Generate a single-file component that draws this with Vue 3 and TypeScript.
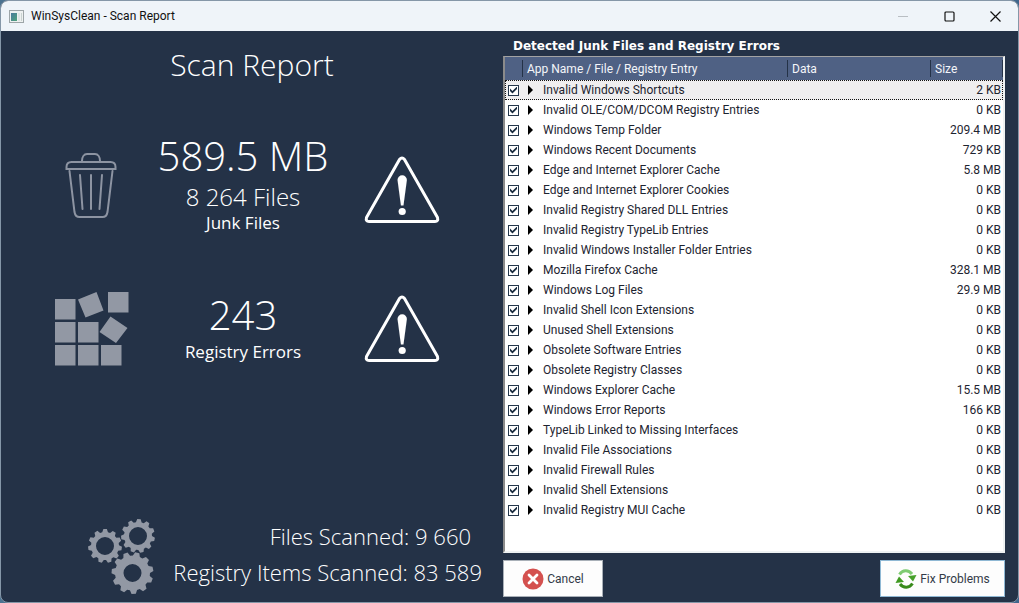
<script setup lang="ts">
import { ref } from 'vue'

interface ScanItem {
  name: string
  data: string
  size: string
  checked: boolean
}

const source: [string, string][] = [
  ['Invalid Windows Shortcuts', '2 KB'],
  ['Invalid OLE/COM/DCOM Registry Entries', '0 KB'],
  ['Windows Temp Folder', '209.4 MB'],
  ['Windows Recent Documents', '729 KB'],
  ['Edge and Internet Explorer Cache', '5.8 MB'],
  ['Edge and Internet Explorer Cookies', '0 KB'],
  ['Invalid Registry Shared DLL Entries', '0 KB'],
  ['Invalid Registry TypeLib Entries', '0 KB'],
  ['Invalid Windows Installer Folder Entries', '0 KB'],
  ['Mozilla Firefox Cache', '328.1 MB'],
  ['Windows Log Files', '29.9 MB'],
  ['Invalid Shell Icon Extensions', '0 KB'],
  ['Unused Shell Extensions', '0 KB'],
  ['Obsolete Software Entries', '0 KB'],
  ['Obsolete Registry Classes', '0 KB'],
  ['Windows Explorer Cache', '15.5 MB'],
  ['Windows Error Reports', '166 KB'],
  ['TypeLib Linked to Missing Interfaces', '0 KB'],
  ['Invalid File Associations', '0 KB'],
  ['Invalid Firewall Rules', '0 KB'],
  ['Invalid Shell Extensions', '0 KB'],
  ['Invalid Registry MUI Cache', '0 KB'],
]

const items = ref<ScanItem[]>(source.map(([name, size]) => ({ name, data: '', size, checked: true })))
const selected = ref(0)

// Ring-shaped gear outline, filled with the even-odd rule.
function gear(cx: number, cy: number, outer: number, root: number, hole: number, teeth: number, turn: number): string {
  const step = (Math.PI * 2) / teeth
  const at = (r: number, a: number) => `${(cx + r * Math.cos(a)).toFixed(2)} ${(cy + r * Math.sin(a)).toFixed(2)}`
  const points: string[] = []
  for (let i = 0; i < teeth; i++) {
    const a = turn + i * step
    points.push(at(root, a - step * 0.36), at(outer, a - step * 0.18), at(outer, a + step * 0.18), at(root, a + step * 0.36))
  }
  return `M${points.join('L')}ZM${cx - hole} ${cy}a${hole} ${hole} 0 1 0 ${hole * 2} 0a${hole} ${hole} 0 1 0 ${-hole * 2} 0Z`
}

const gears = [
  gear(17, 28, 17, 14, 9, 11, 0.15),
  gear(50, 18, 17, 14, 9, 11, 0.2),
  gear(44.5, 55, 21, 17.5, 9, 11, -0.2),
]
</script>

<template>
  <main class="window">
    <header class="titlebar">
      <svg class="app-icon" width="15" height="13" viewBox="0 0 15 13" aria-hidden="true">
        <defs>
          <linearGradient id="screen" x1="0" y1="0" x2="1" y2="1">
            <stop offset="0" stop-color="#4a7a9c" />
            <stop offset="1" stop-color="#4fa37c" />
          </linearGradient>
        </defs>
        <rect x=".5" y=".5" width="14" height="12" fill="#eef1f1" stroke="#9da5a8" />
        <rect x="2" y="3" width="6" height="8" fill="url(#screen)" />
        <rect x="9" y="3" width="2" height="8" fill="#dfe5e4" />
        <rect x="12" y="3" width="1" height="8" fill="#c9d3d1" />
      </svg>
      <h1 class="caption">WinSysClean - Scan Report</h1>
      <div class="controls">
        <button type="button" aria-label="Minimize" disabled>
          <svg width="11" height="11" viewBox="0 0 11 11"><path d="M0 5.5h10" stroke="#b9bec3" fill="none" /></svg>
        </button>
        <button type="button" aria-label="Maximize">
          <svg width="11" height="11" viewBox="0 0 11 11"><rect x="1" y="1" width="9" height="9" rx="1" fill="none" stroke="#111" stroke-width="1.2" /></svg>
        </button>
        <button type="button" aria-label="Close">
          <svg width="11" height="11" viewBox="0 0 11 11"><path d="M.5 .5l10 10M10.5 .5l-10 10" fill="none" stroke="#111" stroke-width="1.2" /></svg>
        </button>
      </div>
    </header>

    <div class="content">
      <section class="summary">
        <h2 class="heading">Scan Report</h2>

        <div class="stat junk">
          <svg width="52" height="76" viewBox="0 0 52 76" fill="none" stroke="#8d94a2" stroke-width="2" stroke-linecap="round" aria-hidden="true">
            <path d="M17 9c0-4 2-7 5-7h8c3 0 5 3 5 7" />
            <path d="M1.5 17v-2c0-3 2-5 5-5h39c3 0 5 2 5 5v2z" />
            <path d="M4.5 19l5 41c.5 3 2 5 5 5h23c3 0 4.5-2 5-5l5-41M15 23l2.5 34M26 23v34M37 23l-2.5 34" />
          </svg>
          <div class="figures">
            <strong class="big">589.5 MB</strong>
            <span class="mid">8 264 Files</span>
            <span class="small">Junk Files</span>
          </div>
          <svg width="76" height="68" viewBox="0 0 76 68" aria-hidden="true">
            <path d="M35.5 3.5Q38 .5 40.5 3.5L73.5 61.5Q74.5 65.5 71 65.5H5Q1.5 65.5 2.5 61.5Z" fill="none" stroke="#fff" stroke-width="3" stroke-linejoin="round" />
            <path d="M33.5 24a4.7 4.7 0 0 1 9.4 0L39.5 49.5h-2.6Z" fill="#fff" />
            <circle cx="38.2" cy="55.5" r="3.6" fill="#fff" />
          </svg>
        </div>

        <div class="stat registry">
          <svg width="76" height="76" viewBox="0 0 76 76" fill="#9298a4" aria-hidden="true">
            <rect x="2" y="8" width="20.5" height="20.5" />
            <rect x="55" y="1" width="20.5" height="20.5" />
            <rect x="2" y="31" width="20.5" height="20.5" />
            <rect x="25" y="31" width="20.5" height="20.5" />
            <rect x="2" y="54" width="20.5" height="20.5" />
            <rect x="25" y="54" width="20.5" height="20.5" />
            <rect x="48" y="54" width="20.5" height="20.5" />
            <path d="M25 8.5L43.5 1 50.5 19.500 32.500 26.500ZM57.500 25.500L74.500 37 63 52 46.500 41Z" />
          </svg>
          <div class="figures">
            <strong class="big">243</strong>
            <span class="small">Registry Errors</span>
          </div>
          <svg width="76" height="68" viewBox="0 0 76 68" aria-hidden="true">
            <path d="M35.5 3.5Q38 .5 40.5 3.5L73.5 61.5Q74.5 65.5 71 65.5H5Q1.5 65.5 2.5 61.5Z" fill="none" stroke="#fff" stroke-width="3" stroke-linejoin="round" />
            <path d="M33.5 24a4.7 4.7 0 0 1 9.4 0L39.5 49.5h-2.6Z" fill="#fff" />
            <circle cx="38.2" cy="55.5" r="3.6" fill="#fff" />
          </svg>
        </div>

        <div class="totals">
          <svg width="68" height="78" viewBox="0 0 68 78" fill="#9298a4" fill-rule="evenodd" aria-hidden="true">
            <path v-for="d in gears" :key="d" :d="d" />
          </svg>
          <div class="counts">
            <p class="files">Files Scanned: 9 660</p>
            <p>Registry Items Scanned: 83 589</p>
          </div>
        </div>
      </section>

      <section class="results">
        <h2 class="list-title">Detected Junk Files and Registry Errors</h2>
        <div class="list">
          <table>
            <colgroup>
              <col class="c-check" />
              <col class="c-name" />
              <col class="c-data" />
              <col class="c-size" />
            </colgroup>
            <thead>
              <tr>
                <th aria-label="Selected"></th>
                <th>App Name / File / Registry Entry</th>
                <th>Data</th>
                <th>Size</th>
              </tr>
            </thead>
            <tbody>
              <tr v-for="(item, i) in items" :key="item.name" :class="{ selected: i === selected }" @click="selected = i">
                <td class="check"><input v-model="item.checked" type="checkbox" :aria-label="item.name" /></td>
                <td class="name">
                  <div class="entry">
                    <button type="button" class="expand" :aria-label="'Expand ' + item.name"></button>
                    <span>{{ item.name }}</span>
                  </div>
                </td>
                <td>{{ item.data }}</td>
                <td class="size">{{ item.size }}</td>
              </tr>
            </tbody>
          </table>
        </div>
        <footer class="actions">
          <button type="button" class="action cancel">
            <svg width="22" height="22" viewBox="0 0 22 22" aria-hidden="true">
              <circle cx="11" cy="11" r="10.5" fill="#d4514f" />
              <path d="M7 7l8 8M15 7l-8 8" stroke="#fff" stroke-width="2.8" stroke-linecap="round" />
            </svg>
            Cancel
          </button>
          <button type="button" class="action fix">
            <svg width="22" height="20" viewBox="0 0 22 20" aria-hidden="true">
              <path d="M4.500 5.500C7.500 .8 13.500 .5 17 5" fill="none" stroke="#7ecb72" stroke-width="3" />
              <path d="M13 7L21.500 6 18 12.500Z" fill="#459f29" />
              <path d="M17.500 14.500C14.500 19.200 8.500 19.500 5 15" fill="none" stroke="#388a1b" stroke-width="3" />
              <path d="M9 13L.5 14 4 7.500Z" fill="#3f9a20" />
            </svg>
            Fix Problems
          </button>
        </footer>
      </section>
    </div>
  </main>
</template>

<style>
html,
body,
#app {
  height: 100%;
}

body {
  margin: 0;
  background: linear-gradient(90deg, #4c7391, #8b929c 40%, #8b929c 60%, #3f668c);
}
</style>

<style scoped>
.window {
  box-sizing: border-box;
  min-height: 100%;
  display: flex;
  flex-direction: column;
  overflow: hidden;
  border: 1px solid #8597a8;
  border-radius: 8px;
  background: #243247;
  font: 12px/20px Roboto, "Noto Sans", sans-serif;
}

h1,
h2,
p {
  margin: 0;
}

button {
  padding: 0;
  border: 0;
  background: none;
  font: inherit;
}

.titlebar {
  display: flex;
  align-items: center;
  height: 30px;
  padding-left: 8px;
  background: #eff4f9;
}

.caption {
  flex: 1;
  margin-left: 7px;
  color: #111;
  font-size: 12px;
  font-weight: 400;
}

.controls {
  display: flex;
}

.controls button {
  display: flex;
  align-items: center;
  justify-content: center;
  width: 46px;
  height: 30px;
}

.content {
  flex: 1;
  display: grid;
  grid-template-columns: 502fr 515fr;
}

.summary {
  display: flex;
  flex-direction: column;
  padding: 14px 0 6px;
  color: #fff;
  font-family: "Open Sans", "Noto Sans", sans-serif;
  font-weight: 300;
}

.heading {
  font-size: 30px;
  line-height: 40px;
  font-weight: 300;
  text-align: center;
}

.stat {
  display: grid;
  grid-template-columns: 118fr 186fr 132fr;
  align-items: center;
  justify-items: center;
  padding: 0 35px 0 31px;
}

.junk {
  min-height: 116px;
  margin-top: 47px;
}

.registry {
  margin-top: 43px;
}

.figures {
  display: flex;
  flex-direction: column;
  align-items: center;
  align-self: start;
  white-space: nowrap;
}

.big {
  font-size: 40px;
  line-height: 48px;
  font-weight: 300;
}

.mid {
  font-size: 24px;
  line-height: 34px;
}

.small {
  font-size: 17px;
  line-height: 18px;
  font-weight: 400;
}

.registry .figures {
  gap: 4px;
}

.totals {
  display: flex;
  align-items: flex-start;
  justify-content: space-between;
  margin-top: auto;
  padding: 0 21px 0 87px;
}

.counts {
  font-size: 22px;
  line-height: 36px;
  text-align: right;
  white-space: nowrap;
}

.files {
  padding-right: 11px;
}

.results {
  display: flex;
  flex-direction: column;
  padding: 6px 13px 5px 0;
}

.list-title {
  margin-left: 10px;
  color: #fff;
  font: bold 12px/19px "DejaVu Sans", sans-serif;
}

.list {
  flex: 1;
  border: 1px solid #a3a3a3;
  border-right: 2px solid #eef2f3;
  border-bottom: 2px solid #eef2f3;
  border-left: 2px solid #8b8b8b;
  background: #fff;
}

table {
  width: 100%;
  table-layout: fixed;
  border-collapse: collapse;
  color: #1d2430;
}

.c-check {
  width: 18px;
}

.c-data {
  width: 143px;
}

.c-size {
  width: 72px;
}

th {
  height: 23px;
  padding: 0 0 0 4px;
  background: linear-gradient(#243247, #243247) right 0 center / 1px 17px no-repeat #4f6184;
  color: #f4f6fa;
  font-weight: 400;
  text-align: left;
}

td {
  height: 20px;
  padding: 0;
  line-height: 18px;
}

.selected {
  outline: 1px dotted #111;
  outline-offset: -1px;
  background: #efeeef;
}

.check input {
  display: block;
  appearance: none;
  box-sizing: border-box;
  width: 11px;
  height: 11px;
  margin: 0 0 0 3px;
  border: 1px solid #25374c;
  background: #fff;
}

.check input:checked::after {
  content: "";
  display: block;
  width: 7px;
  height: 7px;
  margin: 1px;
  background: #16283c;
  clip-path: polygon(0 30%, 35% 65%, 100% 0, 100% 35%, 35% 100%, 0 65%);
}

.entry {
  display: flex;
  align-items: center;
  gap: 10px;
  padding-left: 5px;
}

.expand {
  width: 5px;
  height: 10px;
  background: #000;
  clip-path: polygon(0 0, 100% 50%, 0 100%);
}

.size {
  padding-right: 2px;
  text-align: right;
}

.actions {
  display: flex;
  justify-content: space-between;
  margin-top: 7px;
}

.action {
  display: flex;
  align-items: center;
  justify-content: center;
  gap: 3px;
  height: 37px;
  border: 1px solid #a9b0b8;
  background: #fdfdfd;
  color: #333b48;
}

.cancel {
  width: 100px;
}

.fix {
  width: 125px;
  border-color: #8fb8d4;
}
</style>
